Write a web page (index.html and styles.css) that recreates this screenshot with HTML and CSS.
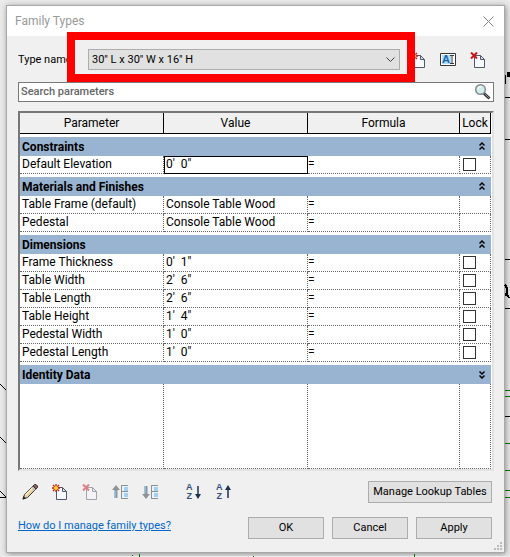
FILE: index.html
```html
<!DOCTYPE html>
<html lang="en">
<head>
<meta charset="utf-8">
<title>Family Types</title>
<meta name="viewport" content="width=device-width">
<link rel="stylesheet" href="styles.css">
</head>
<body>
<svg class="defs" aria-hidden="true">
  <symbol id="page" viewBox="0 0 16 16">
    <path d="M4.500 3.500h6l4 4v8h-10z" fill="#f8f9fc" stroke="currentColor"/>
    <path d="M10.500 3.500v4h4z" fill="#dde3ef" stroke="currentColor"/>
  </symbol>
  <symbol id="new" viewBox="0 0 16 16">
    <use href="#page"/>
    <path d="M4 0v8M0 4h8M1 1l6 6M7 1L1 7" stroke="#c81e10" stroke-width="1.300" fill="none"/>
    <circle cx="4" cy="4" r="2" fill="#ffd52a"/>
  </symbol>
  <symbol id="delete" viewBox="0 0 16 16">
    <use href="#page"/>
    <path d="M1 0.500l6 6M7 0.500l-6 6" stroke="#c8141c" stroke-width="2" fill="none"/>
  </symbol>
  <symbol id="up2" viewBox="0 0 6 9">
    <path d="M0.500 3.500L3 1l2.500 2.500M0.500 7.500L3 5l2.500 2.500" stroke="#000" stroke-width="1.500" fill="none"/>
  </symbol>
  <symbol id="boxes" viewBox="0 0 16 16">
    <path d="M10 2h6v5h-6zM10 8h6v6h-6z" fill="#e9f4fc"/>
    <path d="M12 3h4v4h-4zM12 9h4v4h-4z" fill="#a5cfee"/>
    <path d="M9.500 1v14M9.500 1.500H16M9.500 7.500H16M9.500 14.500H16" stroke="#8b9095" fill="none"/>
  </symbol>
</svg>

<svg class="canvas" aria-hidden="true" shape-rendering="crispEdges">
  <g stroke="#000" fill="none">
    <path d="M505 97.500h5M505 139.500h5M505 259.500h5M505 308.500h5M505 416.500h5M505.500 75v9"/>
    <path d="M508.500 72v5" stroke-width="3"/>
    <path d="M505 285q3 3 2 9l-2 1m1-2l3 5" stroke-width="2"/>
    <path d="M0 384l6 6M0 437l6 6M0 491l6 6M0 497.500h6"/>
  </g>
  <path d="M505 390.500h5M505 396.500h5M505 443.500h5M505 470.500h5M505 490.500h5M505 497.500h5M139.500 554v3M414.500 554v3M132 555.500h1M253 556.500h1" stroke="#007000" fill="none"/>
</svg>

<main class="dialog">
  <header class="titlebar">
    <h1>Family Types</h1>
    <button class="close" aria-label="Close"><svg width="11" height="11" viewBox="0 0 11 11"><path d="M0.500 0.500l10 10M10.500 0.500l-10 10" stroke="#808080"/></svg></button>
  </header>

  <div class="content">
    <div class="type-row">
      <label for="type">Type name:</label>
      <div class="picker">
        <select id="type"><option>30" L x 30" W x 16" H</option></select>
        <svg class="arrow" width="9" height="6" viewBox="0 0 9 6"><path d="M0.500 0.500l4 4 4-4" fill="none" stroke="#404040"/></svg>
        <span class="highlight"></span>
      </div>
      <div class="type-tools">
        <button class="tool" aria-label="New type"><svg><use href="#new"/></svg></button>
        <button class="tool" aria-label="Rename type"><svg viewBox="0 0 16 16"><path d="M0.500 1.500h15v12H0.500z" fill="#fff" stroke="#34363e"/><path d="M2 3h9v9H2z" fill="#b4dcf4"/><text class="rename" x="2" y="11">A</text><path d="M10 3.500h4M12 3.500v8M10 11.500h4" stroke="#34363e" fill="none"/></svg></button>
        <button class="tool" aria-label="Delete type"><svg><use href="#delete"/></svg></button>
      </div>
    </div>

    <div class="search">
      <input type="text" aria-label="Search parameters" placeholder="Search parameters">
      <svg width="16" height="16" viewBox="0 0 16 16"><path d="M9 9.500l5.500 5" stroke="#303438" stroke-width="3"/><path d="M10 10l4 4" stroke="#8a949c" stroke-width="1"/><circle cx="5.500" cy="5.500" r="4.800" fill="#d3eeee" stroke="#808789" stroke-width="1.400"/><path d="M3 5q.5-2.500 3-2.500" stroke="#fff" stroke-width="1.500" fill="none"/></svg>
    </div>

    <div class="grid-frame">
      <table>
        <colgroup><col class="c-name"><col class="c-value"><col><col class="c-lock"></colgroup>
        <thead><tr><th>Parameter</th><th>Value</th><th>Formula</th><th>Lock</th></tr></thead>
        <tbody>
          <tr class="band"><th colspan="4"><div><span>Constraints</span><svg><use href="#up2"/></svg></div></th></tr>
          <tr><td>Default Elevation</td><td class="selected">0'&nbsp; 0"</td><td>=</td><td><input type="checkbox" aria-label="Lock Default Elevation"></td></tr>
          <tr class="band"><th colspan="4"><div><span>Materials and Finishes</span><svg><use href="#up2"/></svg></div></th></tr>
          <tr><td>Table Frame (default)</td><td>Console Table Wood</td><td>=</td><td></td></tr>
          <tr><td>Pedestal</td><td>Console Table Wood</td><td>=</td><td></td></tr>
          <tr class="band"><th colspan="4"><div><span>Dimensions</span><svg><use href="#up2"/></svg></div></th></tr>
          <tr><td>Frame Thickness</td><td>0'&nbsp; 1"</td><td>=</td><td><input type="checkbox" aria-label="Lock Frame Thickness"></td></tr>
          <tr><td>Table Width</td><td>2'&nbsp; 6"</td><td>=</td><td><input type="checkbox" aria-label="Lock Table Width"></td></tr>
          <tr><td>Table Length</td><td>2'&nbsp; 6"</td><td>=</td><td><input type="checkbox" aria-label="Lock Table Length"></td></tr>
          <tr><td>Table Height</td><td>1'&nbsp; 4"</td><td>=</td><td><input type="checkbox" aria-label="Lock Table Height"></td></tr>
          <tr><td>Pedestal Width</td><td>1'&nbsp; 0"</td><td>=</td><td><input type="checkbox" aria-label="Lock Pedestal Width"></td></tr>
          <tr><td>Pedestal Length</td><td>1'&nbsp; 0"</td><td>=</td><td><input type="checkbox" aria-label="Lock Pedestal Length"></td></tr>
          <tr class="band closed"><th colspan="4"><div><span>Identity Data</span><svg><use href="#up2"/></svg></div></th></tr>
          <tr class="filler"><td></td><td></td><td></td><td></td></tr>
        </tbody>
      </table>
    </div>

    <div class="tool-row">
      <div class="tools">
        <button class="tool" aria-label="Edit parameter"><svg viewBox="0 0 16 16"><path d="M1 15l1.500-4.500L12 1l3 3-9.500 9.500z" fill="#e4cf9d" stroke="#35363a"/><path d="M3.500 11L11 3.500" stroke="#fff2cf" stroke-width="1.500"/><path d="M11 2l1.500-1.500h1.500l1.500 1.500v1.500L14 5z" fill="#945b55" stroke="#35363a"/><path d="M10 3l3 3" stroke="#b8bec4" stroke-width="1.500"/><path d="M0.500 15.500l1-3.500 2.500 2.500z" fill="#222"/></svg></button>
        <button class="tool" aria-label="New parameter"><svg><use href="#new"/></svg></button>
        <button class="tool" aria-label="Delete parameter" disabled><svg><use href="#delete"/></svg></button>
        <button class="tool" aria-label="Move up"><svg viewBox="0 0 16 16"><use href="#boxes"/><path d="M4 1l4 5H5.500v8H2.500V6H0z" fill="#8f9499"/><path d="M3 7v7" stroke="#92c2e4" stroke-width="1.500"/></svg></button>
        <button class="tool" aria-label="Move down"><svg viewBox="0 0 16 16"><use href="#boxes"/><path d="M2.500 2h3v8H8l-4 5-4-5h2.500z" fill="#8f9499"/><path d="M3 2v7" stroke="#92c2e4" stroke-width="1.500"/></svg></button>
        <button class="tool sort" aria-label="Sort ascending"><span class="glyphs"><span>A</span><span>Z</span></span><svg viewBox="0 0 6 16"><path d="M3 2v9" stroke="#1e3050" stroke-width="1.500"/><path d="M0 10h6l-3 5z" fill="#1e3050"/></svg></button>
        <button class="tool sort" aria-label="Sort descending"><span class="glyphs"><span>A</span><span>Z</span></span><svg viewBox="0 0 6 16"><path d="M3 5v9" stroke="#1e3050" stroke-width="1.500"/><path d="M0 6h6l-3-5z" fill="#1e3050"/></svg></button>
      </div>
      <button class="push wide">Manage Lookup Tables</button>
    </div>

    <footer>
      <a href="#help">How do I manage family types?</a>
      <div class="actions">
        <button class="push">OK</button>
        <button class="push">Cancel</button>
        <button class="push">Apply</button>
      </div>
    </footer>
  </div>
  <svg class="grip" width="8" height="8" viewBox="0 0 8 8" aria-hidden="true"><path d="M6 0h2v2H6zM3 3h2v2H3zM6 3h2v2H6zM0 6h2v2H0zM3 6h2v2H3zM6 6h2v2H6z" fill="#bcbcbc"/></svg>
</main>
</body>
</html>
```
FILE: styles.css
```css
* {
  box-sizing: border-box;
}

body {
  margin: 0;
  padding: 5px 5px 3px 6px;
  background: #ebebeb;
  color: #000;
  font: 11px/16px Roboto, "Noto Sans", sans-serif;
}

button,
input,
select {
  margin: 0;
  color: inherit;
  font: inherit;
}

.defs {
  position: absolute;
  width: 0;
  height: 0;
}

.canvas {
  position: absolute;
  z-index: 1;
  top: 0;
  left: 0;
  width: 100%;
  height: 100%;
  pointer-events: none;
}

.dialog {
  position: relative;
  border: 1px solid #a8a8a8;
  background: #f0f0f0;
  box-shadow: 1px 1px 6px #8c8c8c;
}

.titlebar {
  display: flex;
  align-items: center;
  justify-content: space-between;
  height: 30px;
  padding: 0 10px 0 8px;
  background: #fff;
}

h1 {
  margin: 0;
  color: #999;
  font-size: 12px;
  font-weight: 400;
}

.close {
  display: flex;
  padding: 0;
  border: 0;
  background: none;
}

.content {
  padding: 13px 10px 13px 11px;
}

.type-row {
  display: flex;
  align-items: center;
  height: 21px;
}

.type-row label {
  flex: 0 0 70px;
  white-space: nowrap;
}

.picker {
  position: relative;
  flex: 1;
}

.picker select {
  display: block;
  width: 100%;
  height: 21px;
  padding: 0 3px;
  border: 1px solid #adadad;
  border-radius: 0;
  background: #e1e1e1;
  appearance: none;
}

.arrow {
  position: absolute;
  top: 8px;
  right: 5px;
}

.highlight {
  position: absolute;
  z-index: 1;
  inset: -17px -15px -12px -21px;
  border: 8px solid #f00;
  pointer-events: none;
}

.type-tools {
  display: flex;
  gap: 14px;
  margin: 0 8px 0 10px;
}

.tool {
  display: flex;
  align-items: center;
  padding: 0;
  border: 0;
  background: none;
  color: #50586c;
}

.tool svg {
  width: 16px;
  height: 16px;
}

.tool:disabled {
  opacity: 0.5;
}

.rename {
  fill: #1767ad;
  font: 700 11px "Liberation Sans", sans-serif;
}

.sort {
  width: 16px;
  gap: 2px;
  margin-left: 14px;
}

.sort + .sort {
  margin-left: 0;
}

.sort svg {
  width: 6px;
}

.glyphs {
  display: grid;
  color: #355079;
  font: 700 9px/9px "Liberation Sans", sans-serif;
}

.search {
  display: flex;
  align-items: center;
  height: 20px;
  margin-top: 12px;
  padding: 0 2px;
  border: 1px solid #7a7a7a;
  background: #fff;
}

.search input {
  flex: 1;
  min-width: 0;
  padding: 0;
  border: 0;
  outline: 0;
  background: none;
}

.search input::placeholder {
  color: #666;
  opacity: 1;
  font-weight: 500;
}

.grid-frame {
  margin-top: 9px;
  padding-right: 1px;
  border-style: solid;
  border-width: 2px;
  border-color: #777 #e3e3e3 #e3e3e3 #777;
  background: #fff;
}

table {
  width: 100%;
  border-collapse: separate;
  border-spacing: 0;
  font-size: 12px;
  table-layout: fixed;
}

.c-name,
.c-value {
  width: 144px;
}

.c-lock {
  width: 31px;
}

th,
td {
  padding: 0 2px;
  text-align: left;
  white-space: nowrap;
}

thead th {
  height: 21px;
  padding: 0;
  border-right: 1px solid #000;
  border-bottom: 1px solid #000;
  background: #f0f0f0;
  font-weight: 400;
  text-align: center;
}

td {
  height: 18px;
  padding-bottom: 1px;
  border-right: 1px dotted #666;
  border-bottom: 1px dotted #666;
}

td:nth-child(3) {
  padding-left: 0;
}

.band th {
  height: 22px;
  padding: 0;
  border-top: 3px solid #fff;
  background: #99b4d1;
}

.band div {
  display: flex;
  align-items: center;
  justify-content: space-between;
  padding: 0 6px 0 2px;
}

.band svg {
  width: 6px;
  height: 9px;
}

.closed svg {
  transform: rotate(180deg);
}

.selected {
  outline: 1px solid #000;
  outline-offset: -1px;
}

.filler td {
  height: 85px;
}

input[type="checkbox"] {
  display: block;
  width: 13px;
  height: 13px;
  margin: 2px 1px 1px;
  border: 1px solid #333;
  background: #fff;
  appearance: none;
}

.tool-row {
  display: flex;
  align-items: center;
  justify-content: space-between;
  margin-top: 10px;
  padding: 0 2px 0 4px;
}

.tools {
  display: flex;
  gap: 14px;
}

.push {
  width: 76px;
  height: 22px;
  padding: 0;
  border: 1px solid #adadad;
  background: #e1e1e1;
  white-space: nowrap;
}

.wide {
  width: 124px;
}

footer {
  display: flex;
  align-items: center;
  justify-content: space-between;
  margin-top: 14px;
  padding-right: 2px;
}

footer a {
  margin-bottom: 4px;
  color: #0066cc;
}

.actions {
  display: flex;
  gap: 8px;
}

.grip {
  position: absolute;
  right: 2px;
  bottom: 2px;
}
```
